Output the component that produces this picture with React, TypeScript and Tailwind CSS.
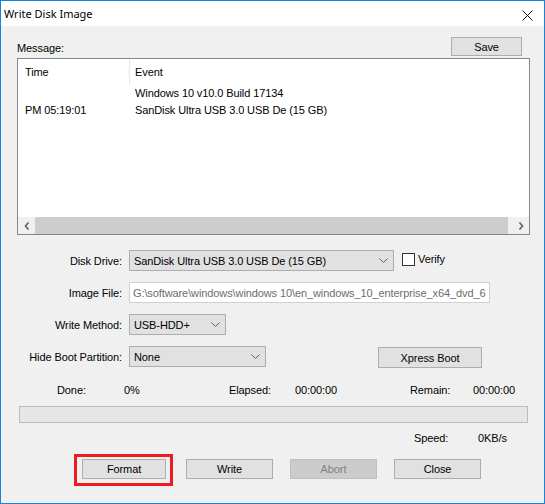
import React from "react";

const Chevron = () => (
  <svg width="9" height="5" viewBox="0 0 9 5" className="shrink-0">
    <path d="M0.5 0.5 L4.5 4.5 L8.5 0.5" fill="none" stroke="#5f5f5f" strokeWidth="1" />
  </svg>
);

const Combo = ({ w, text }: { w: string; text: string }) => (
  <div className={`${w} h-[21px] bg-[#e1e1e1] border border-[#adadad] flex items-center pl-[4px] pr-[5px]`}>
    <span className="flex-1 whitespace-nowrap overflow-hidden">{text}</span>
    <Chevron />
  </div>
);

const Btn = ({ w, text, disabled }: { w: string; text: string; disabled?: boolean }) => (
  <div
    className={`${w} h-[20px] border flex items-center justify-center ${
      disabled ? "bg-[#cccccc] border-[#bfbfbf] text-[#838383]" : "bg-[#e1e1e1] border-[#adadad] text-black"
    }`}
  >
    {text}
  </div>
);

export default function App() {
  return (
    <div
      className="w-[545px] h-[504px] border border-[#1883d7] flex flex-col text-[11px] text-black tracking-[-0.1px] leading-[14px]"
      style={{ fontFamily: '"Liberation Sans", Arial, sans-serif' }}
    >
      {/* Title bar */}
      <div className="h-[25px] bg-white flex items-center pl-[3px] pr-[11px]">
        <span className="flex-1 text-[11px] tracking-normal" style={{ fontFamily: '"Noto Sans", "Open Sans", sans-serif' }}>
          Write Disk Image
        </span>
        <svg width="11" height="11" viewBox="0 0 11 11" className="mt-[3px]">
          <path d="M0.5 0.5 L10.5 10.5 M10.5 0.5 L0.5 10.5" stroke="#111" strokeWidth="1" />
        </svg>
      </div>

      {/* Body */}
      <div className="flex-1 bg-[#f0f0f0] flex flex-col pt-[11px]">
        {/* Message row */}
        <div className="flex items-end h-[19px] pl-[16px]">
          <span className="flex-1 mb-[1px]">Message:</span>
          <div className="w-[71px] h-[19px] bg-[#e1e1e1] border border-[#adadad] flex items-center justify-center mr-[22px]">
            Save
          </div>
        </div>

        {/* Listbox */}
        <div className="ml-[16px] mt-[2px] w-[513px] h-[177px] border border-[#828790] bg-white flex flex-col">
          <div className="h-[25px] flex">
            <div className="w-[111px] pl-[7px] flex items-center">Time</div>
            <div className="w-[1px] bg-[#e5e5e5] mt-[1px]" />
            <div className="pl-[5px] flex items-center">Event</div>
          </div>
          <div className="flex-1 flex flex-col">
            <div className="h-[17px] flex items-center">
              <div className="w-[112px]" />
              <div className="pl-[5px]">Windows 10 v10.0 Build 17134</div>
            </div>
            <div className="h-[17px] flex items-center">
              <div className="w-[112px] pl-[7px]">PM 05:19:01</div>
              <div className="pl-[5px]">SanDisk Ultra USB 3.0 USB De (15 GB)</div>
            </div>
          </div>
          <div className="h-[17px] bg-[#f0f0f0] flex">
            <div className="w-[17px] flex items-center justify-center">
              <svg width="6" height="8" viewBox="0 0 6 8">
                <path d="M4.5 0.5 L1.5 4 L4.5 7.5" fill="none" stroke="#606060" strokeWidth="1.6" />
              </svg>
            </div>
            <div className="flex-1 flex pr-[4px]">
              <div className="flex-1 bg-[#cdcdcd]" />
            </div>
            <div className="w-[17px] flex items-center justify-center">
              <svg width="6" height="8" viewBox="0 0 6 8">
                <path d="M1.5 0.5 L4.5 4 L1.5 7.5" fill="none" stroke="#606060" strokeWidth="1.6" />
              </svg>
            </div>
          </div>
        </div>

        {/* Form */}
        <div className="flex flex-col gap-[11px] mt-[15px]">
          <div className="flex items-center h-[21px]">
            <div className="w-[121px] text-right">Disk Drive:</div>
            <div className="ml-[7px]">
              <Combo w="w-[265px]" text="SanDisk Ultra USB 3.0 USB De (15 GB)" />
            </div>
            <div className="ml-[8px] w-[13px] h-[13px] border border-[#333333] bg-white mb-[2px]" />
            <span className="ml-[3px] mb-[3px]">Verify</span>
          </div>
          <div className="flex items-center h-[21px]">
            <div className="w-[121px] text-right">Image File:</div>
            <div className="ml-[7px] w-[361px] h-[21px] bg-white border border-[#d0d0d0] flex items-center pl-[3px] overflow-hidden">
              <span className="whitespace-nowrap text-[#6d6d6d]">
                G:\software\windows\windows 10\en_windows_10_enterprise_x64_dvd_6
              </span>
            </div>
          </div>
          <div className="flex items-center h-[21px]">
            <div className="w-[121px] text-right">Write Method:</div>
            <div className="ml-[7px]">
              <Combo w="w-[97px]" text="USB-HDD+" />
            </div>
          </div>
          <div className="flex items-start h-[21px]">
            <div className="w-[121px] text-right self-center">Hide Boot Partition:</div>
            <div className="ml-[7px]">
              <Combo w="w-[137px]" text="None" />
            </div>
            <div className="ml-[112px] mt-[1px] w-[104px] h-[21px] bg-[#e1e1e1] border border-[#adadad] flex items-center justify-center">
              Xpress Boot
            </div>
          </div>
        </div>

        {/* Stats */}
        <div className="flex mt-[16px] pl-[56px] h-[14px] items-center">
          <span className="w-[67px]">Done:</span>
          <span className="w-[105px]">0%</span>
          <span className="w-[66px]">Elapsed:</span>
          <span className="w-[115px]">00:00:00</span>
          <span className="w-[63px]">Remain:</span>
          <span>00:00:00</span>
        </div>

        <div className="ml-[18px] mt-[9px] w-[509px] h-[17px] bg-[#e6e6e6] border border-[#bcbcbc]" />

        <div className="flex mt-[8px] pl-[413px] h-[14px] items-center">
          <span className="w-[64px]">Speed:</span>
          <span>0KB/s</span>
        </div>

        {/* Buttons */}
        <div className="flex items-start mt-[9px]">
          <div className="ml-[73px] border-[3px] border-[#ed1c24] pl-[5px] pr-[4px] pt-[2px] pb-[4px]">
            <Btn w="w-[84px]" text="Format" />
          </div>
          <div className="ml-[13px] mt-[5px]">
            <Btn w="w-[87px]" text="Write" />
          </div>
          <div className="ml-[17px] mt-[5px]">
            <Btn w="w-[87px]" text="Abort" disabled />
          </div>
          <div className="ml-[17px] mt-[5px]">
            <Btn w="w-[87px]" text="Close" />
          </div>
        </div>
      </div>
    </div>
  );
}
